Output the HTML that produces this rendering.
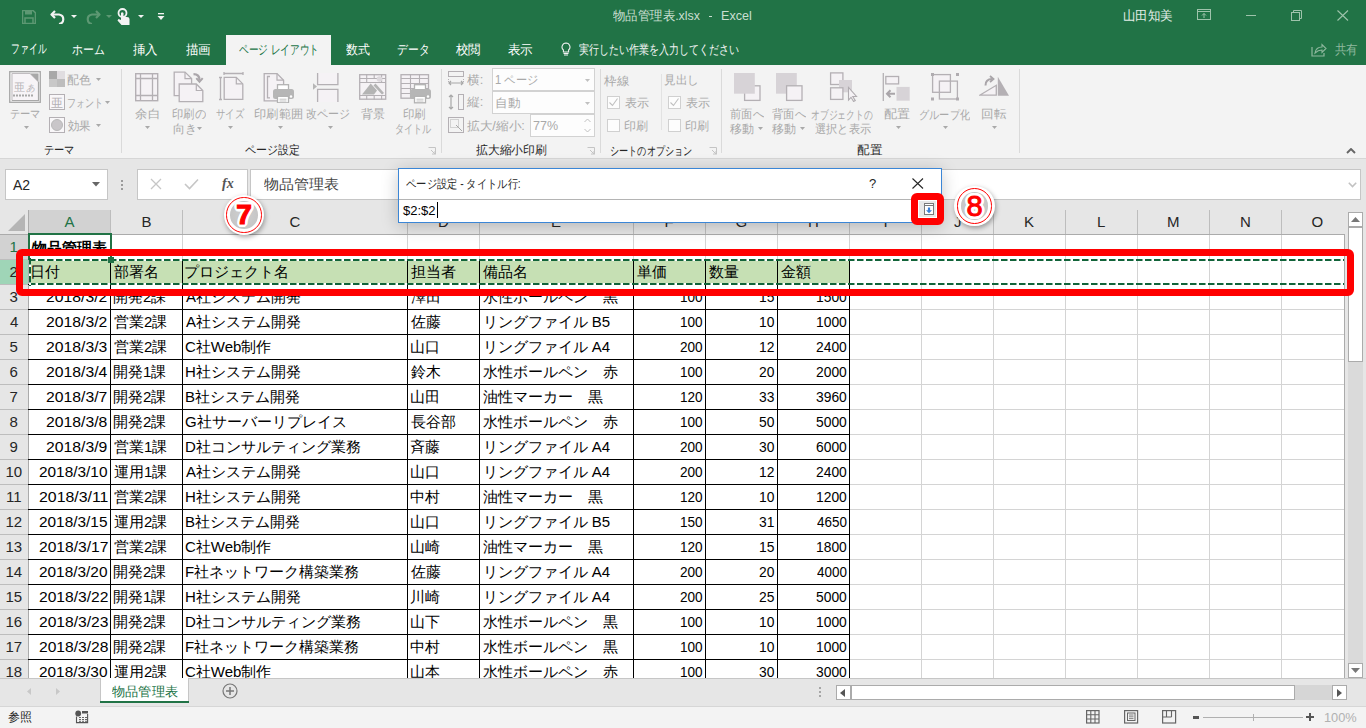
<!DOCTYPE html>
<html lang="ja"><head><meta charset="utf-8">
<style>
*{box-sizing:border-box;margin:0;padding:0}
html,body{width:1366px;height:728px;overflow:hidden;background:#e6e6e6;font-family:"Liberation Sans",sans-serif;position:relative}
.a{position:absolute;white-space:nowrap}
svg.a text{font-family:"Liberation Sans",sans-serif}
</style></head><body>
<div class="a" style="left:0px;top:0px;width:1366px;height:65px;background:#217346"></div>
<svg class="a" style="left:22px;top:10px;" width="14" height="14" viewBox="0 0 14 14"><path d="M0.5 0.5h10.5l2.5 2.5v10.5h-13z" fill="none" stroke="#5d9873" stroke-width="1.6"/><rect x="3" y="0.5" width="7" height="4" fill="#5d9873"/><rect x="3" y="8" width="8" height="6" fill="none" stroke="#5d9873" stroke-width="1.5"/></svg>
<svg class="a" style="left:50px;top:9px;" width="16" height="15" viewBox="0 0 16 15"><path d="M5 2 L1.5 5.5 L5 9" fill="none" stroke="#f3f3f3" stroke-width="2.2" stroke-linejoin="round"/><path d="M2 5.5 H9 A5 4.8 0 0 1 9 15" fill="none" stroke="#f3f3f3" stroke-width="2.2"/></svg>
<svg class="a" style="left:71px;top:15px;" width="6" height="3" viewBox="0 0 6 3"><path d="M0 0h6l-3 3z" fill="#f3f3f3"/></svg>
<svg class="a" style="left:85px;top:9px;" width="16" height="15" viewBox="0 0 16 15"><path d="M11 2 L14.5 5.5 L11 9" fill="none" stroke="#5d9873" stroke-width="2.2" stroke-linejoin="round"/><path d="M14 5.5 H7 A5 4.8 0 0 0 7 15" fill="none" stroke="#5d9873" stroke-width="2.2"/></svg>
<svg class="a" style="left:106px;top:15px;" width="6" height="3" viewBox="0 0 6 3"><path d="M0 0h6l-3 3z" fill="#5d9873"/></svg>
<svg class="a" style="left:117px;top:8px;" width="14" height="18" viewBox="0 0 14 18"><circle cx="5.5" cy="5" r="4" fill="none" stroke="#f3f3f3" stroke-width="1.8"/><path d="M4 5 V12 L1.5 11 L0.5 12.5 L4.5 17 H12.5 V11 Q12.5 9 10 9 H6.5 V5 Q5 3.5 4 5z" fill="#f3f3f3"/></svg>
<svg class="a" style="left:138px;top:15px;" width="6" height="3" viewBox="0 0 6 3"><path d="M0 0h6l-3 3z" fill="#f3f3f3"/></svg>
<svg class="a" style="left:157px;top:13px;" width="8" height="8" viewBox="0 0 8 8"><rect x="1" y="0" width="6" height="1.3" fill="#f3f3f3"/><path d="M0.5 3h7l-3.5 4z" fill="#f3f3f3"/></svg>
<div class="a" style="left:613.00px;top:7.25px;font-size:13px;line-height:18px;color:#c9dfd1;font-weight:normal;transform:scaleX(0.9560);transform-origin:0 0;">物品管理表.xlsx</div>
<div class="a" style="left:709px;top:16px;width:3px;height:1px;background:#c9dfd1"></div>
<div class="a" style="left:721.03px;top:7.25px;font-size:13px;line-height:18px;color:#c9dfd1;font-weight:normal;transform:scaleX(0.9667);transform-origin:0 0;">Excel</div>
<div class="a" style="left:1123.04px;top:7.00px;font-size:13px;line-height:18px;color:#e4eee8;font-weight:normal;transform:scaleX(0.9600);transform-origin:0 0;">山田知美</div>
<svg class="a" style="left:1197px;top:9px;" width="15" height="12" viewBox="0 0 15 12"><rect x="0.5" y="0.5" width="13" height="10" fill="none" stroke="#9ec3ab" stroke-width="1"/><path d="M0.5 2.5h13" stroke="#9ec3ab"/><path d="M7 9V4.5M5 6.5l2-2 2 2" fill="none" stroke="#9ec3ab"/></svg>
<div class="a" style="left:1246px;top:15px;width:10px;height:1px;background:#9ec3ab"></div>
<svg class="a" style="left:1291px;top:10px;" width="12" height="11" viewBox="0 0 12 11"><rect x="0.5" y="2.5" width="8" height="8" fill="none" stroke="#9ec3ab"/><path d="M2.5 2.5V0.5H10.5V8.5H8.5" fill="none" stroke="#9ec3ab"/></svg>
<svg class="a" style="left:1337px;top:10px;" width="12" height="11" viewBox="0 0 12 11"><path d="M0.5 0.5L11 10.5M11 0.5L0.5 10.5" stroke="#9ec3ab" stroke-width="1.1"/></svg>
<div class="a" style="left:226px;top:35px;width:105px;height:30px;background:#f3f3f3"></div>
<div class="a" style="left:10.64px;top:40.00px;font-size:13px;line-height:18px;color:#ffffff;font-weight:normal;transform:scaleX(0.6800);transform-origin:0 0;">ファイル</div>
<div class="a" style="left:72.16px;top:40.50px;font-size:13px;line-height:18px;color:#ffffff;font-weight:normal;transform:scaleX(0.8378);transform-origin:0 0;">ホーム</div>
<div class="a" style="left:133.00px;top:41.00px;font-size:13px;line-height:18px;color:#ffffff;font-weight:normal;transform:scaleX(0.9600);transform-origin:0 0;">挿入</div>
<div class="a" style="left:186.00px;top:41.00px;font-size:13px;line-height:18px;color:#ffffff;font-weight:normal;transform:scaleX(0.9615);transform-origin:0 0;">描画</div>
<div class="a" style="left:346.00px;top:41.00px;font-size:13px;line-height:18px;color:#ffffff;font-weight:normal;transform:scaleX(0.9231);transform-origin:0 0;">数式</div>
<div class="a" style="left:397.17px;top:40.50px;font-size:13px;line-height:18px;color:#ffffff;font-weight:normal;transform:scaleX(0.8333);transform-origin:0 0;">データ</div>
<div class="a" style="left:456.00px;top:40.50px;font-size:13px;line-height:18px;color:#ffffff;font-weight:normal;transform:scaleX(0.9600);transform-origin:0 0;">校閲</div>
<div class="a" style="left:508.00px;top:41.00px;font-size:13px;line-height:18px;color:#ffffff;font-weight:normal;transform:scaleX(0.9615);transform-origin:0 0;">表示</div>
<div class="a" style="left:239.00px;top:40.50px;font-size:13px;line-height:18px;color:#217346;font-weight:normal;transform:scaleX(0.7429);transform-origin:0 0;">ページ レイアウト</div>
<svg class="a" style="left:561px;top:42px;" width="10" height="14" viewBox="0 0 10 14"><path d="M5 1 A4 4 0 0 1 7.6 8 V10 H2.4 V8 A4 4 0 0 1 5 1z" fill="none" stroke="#f3f3f3" stroke-width="1.1"/><path d="M2.5 11.5H7.5M3 13H7" stroke="#f3f3f3" stroke-width="1"/></svg>
<div class="a" style="left:579.00px;top:41.00px;font-size:13px;line-height:18px;color:#f3f3f3;font-weight:normal;transform:scaleX(0.7692);transform-origin:0 0;">実行したい作業を入力してください</div>
<svg class="a" style="left:1311px;top:42px;" width="16" height="15" viewBox="0 0 16 15"><path d="M1 5v9h12v-3" fill="none" stroke="#8fb89e" stroke-width="1.2"/><path d="M4 11 Q5 5 11 5 V2.5 L15 6.5 L11 10.5 V8 Q7 8 4 11z" fill="none" stroke="#8fb89e" stroke-width="1.1"/></svg>
<div class="a" style="left:1335.00px;top:41.00px;font-size:13px;line-height:18px;color:#8fb89e;font-weight:normal;transform:scaleX(0.8846);transform-origin:0 0;">共有</div>
<div class="a" style="left:0px;top:65px;width:1366px;height:94px;background:#f3f3f3"></div>
<div class="a" style="left:0px;top:158px;width:1366px;height:1px;background:#d6d6d6"></div>
<svg class="a" style="left:9px;top:71px;" width="32" height="32" viewBox="0 0 32 32"><rect x="0.7" y="0.7" width="30.6" height="30.6" fill="#f3f3f3" stroke="#a8a8a8" stroke-width="1.3"/><path d="M3 2.5H21L29.5 11V29.5H3Z" fill="#f7f4f7" stroke="#c0bcc0"/><path d="M21 2.5H29.5V11Z" fill="#a8a8a8"/><path d="M29.5 11V29.5H3" fill="none" stroke="#a8a8a8" stroke-width="1.2"/><text x="4.5" y="20" font-size="11" fill="#b8b4b8">亜</text><text x="17" y="20" font-size="9" fill="#b8b4b8" font-style="italic">あ</text><path d="M4 24.5h2M7 24.5h2M10 24.5h2M13 24.5h2M16 24.5h2M19 24.5h2M22 24.5h2" stroke="#a8a8a8" stroke-width="2"/></svg>
<div class="a" style="left:10.15px;top:105.50px;font-size:12px;line-height:17px;color:#a9a9a9;font-weight:normal;transform:scaleX(0.8529);transform-origin:0 0;">テーマ</div>
<svg class="a" style="left:23.5px;top:126px;" width="5" height="3" viewBox="0 0 5 3"><path d="M0 0h5l-2.5 3z" fill="#a9a9a9"/></svg>
<svg class="a" style="left:49px;top:71px;" width="16" height="16" viewBox="0 0 16 16"><rect x="0" y="0" width="8" height="8" fill="#a8a8a8"/><rect x="8" y="0" width="8" height="8" fill="#e0dde0"/><rect x="0" y="8" width="8" height="8" fill="#c8c8c8"/><rect x="8" y="8" width="8" height="8" fill="#bdbdbd"/></svg>
<div class="a" style="left:67.00px;top:71.50px;font-size:12px;line-height:17px;color:#a9a9a9;font-weight:normal;">配色</div>
<svg class="a" style="left:95.5px;top:78px;" width="5" height="3" viewBox="0 0 5 3"><path d="M0 0h5l-2.5 3z" fill="#a9a9a9"/></svg>
<svg class="a" style="left:49px;top:94px;" width="16" height="16" viewBox="0 0 16 16"><rect x="0.5" y="0.5" width="15" height="15" fill="#f9f7f9" stroke="#b4b0b4"/><text x="2" y="13" font-size="12" fill="#b4b0b4">亜</text></svg>
<div class="a" style="left:67.25px;top:94.50px;font-size:12px;line-height:17px;color:#a9a9a9;font-weight:normal;transform:scaleX(0.7500);transform-origin:0 0;">フォント</div>
<svg class="a" style="left:104.5px;top:101px;" width="5" height="3" viewBox="0 0 5 3"><path d="M0 0h5l-2.5 3z" fill="#a9a9a9"/></svg>
<svg class="a" style="left:49px;top:117px;" width="16" height="16" viewBox="0 0 16 16"><rect x="0.5" y="0.5" width="15" height="15" fill="#f9f7f9" stroke="#b4b0b4"/><circle cx="8" cy="8" r="5.5" fill="#c9c6c9" stroke="#b8b8b8"/></svg>
<div class="a" style="left:68.00px;top:117.50px;font-size:12px;line-height:17px;color:#a9a9a9;font-weight:normal;transform:scaleX(0.9583);transform-origin:0 0;">効果</div>
<svg class="a" style="left:95.5px;top:124px;" width="5" height="3" viewBox="0 0 5 3"><path d="M0 0h5l-2.5 3z" fill="#a9a9a9"/></svg>
<div class="a" style="left:44.15px;top:141.50px;font-size:12px;line-height:17px;color:#262626;font-weight:normal;transform:scaleX(0.8529);transform-origin:0 0;">テーマ</div>
<div class="a" style="left:121px;top:69px;width:1px;height:84px;background:#dadada"></div>
<svg class="a" style="left:135px;top:73px;" width="24" height="29" viewBox="0 0 24 29"><rect x="0.7" y="0.7" width="22" height="27" fill="#f5f2f5" stroke="#b4b0b4" stroke-width="1.4"/><path d="M5.5 0.7v27M17.5 0.7v27M0.7 5.5h22M0.7 22.5h22" stroke="#b4b0b4" stroke-width="1.3"/></svg>
<div class="a" style="left:135.00px;top:106.00px;font-size:12px;line-height:17px;color:#a9a9a9;font-weight:normal;transform:scaleX(1.0455);transform-origin:0 0;">余白</div>
<svg class="a" style="left:144.5px;top:126px;" width="5" height="3" viewBox="0 0 5 3"><path d="M0 0h5l-2.5 3z" fill="#a9a9a9"/></svg>
<svg class="a" style="left:173px;top:71px;" width="32" height="32" viewBox="0 0 32 32"><path d="M1.2 1.1H12L18.6 7.6V24.6H1.2Z" fill="#f5f2f5" stroke="#b4b0b4" stroke-width="1.3"/><path d="M12 1.1V7.6H18.6" fill="none" stroke="#b4b0b4" stroke-width="1.2"/><path d="M6.2 13H23.3L29.8 19.5V30.6H6.2Z" fill="#f5f2f5" stroke="#b4b0b4" stroke-width="1.3"/><path d="M23.3 13V19.5H29.8" fill="none" stroke="#b4b0b4" stroke-width="1.2"/><path d="M20.5 3.2Q26.5 3.2 26.5 9" fill="none" stroke="#aaa6aa" stroke-width="2.2"/><path d="M23.3 7.2L26.5 10.8L29.7 7.2" fill="none" stroke="#aaa6aa" stroke-width="2"/></svg>
<div class="a" style="left:172.06px;top:106.00px;font-size:12px;line-height:17px;color:#a9a9a9;font-weight:normal;transform:scaleX(0.9429);transform-origin:0 0;">印刷の</div>
<div class="a" style="left:173.00px;top:121.00px;font-size:12px;line-height:17px;color:#a9a9a9;font-weight:normal;">向き</div>
<svg class="a" style="left:196.5px;top:127px;" width="5" height="3" viewBox="0 0 5 3"><path d="M0 0h5l-2.5 3z" fill="#a9a9a9"/></svg>
<svg class="a" style="left:218px;top:72px;" width="27" height="29" viewBox="0 0 27 29"><path d="M2.5 5.5V27.5M1 5.5H4M1 27.5H4" fill="none" stroke="#b4b0b4" stroke-width="1.3"/><path d="M6 1.5H25M6 0V3M25 0V3" fill="none" stroke="#b4b0b4" stroke-width="1.3"/><path d="M6.2 5.4H18.3L24.8 11.9V27.4H6.2Z" fill="#f5f2f5" stroke="#b4b0b4" stroke-width="1.3"/><path d="M18.3 5.4V11.9H24.8" fill="none" stroke="#b4b0b4" stroke-width="1.2"/></svg>
<div class="a" style="left:216.00px;top:106.00px;font-size:12px;line-height:17px;color:#a9a9a9;font-weight:normal;transform:scaleX(0.7778);transform-origin:0 0;">サイズ</div>
<svg class="a" style="left:227.5px;top:126px;" width="5" height="3" viewBox="0 0 5 3"><path d="M0 0h5l-2.5 3z" fill="#a9a9a9"/></svg>
<svg class="a" style="left:263px;top:73px;" width="32" height="30" viewBox="0 0 32 30"><path d="M1.2 0.6H14L20.6 7.2V27.8H1.2Z" fill="#f5f2f5" stroke="#b4b0b4" stroke-width="1.3"/><path d="M14 0.6V7.2H20.6" fill="none" stroke="#b4b0b4" stroke-width="1.2"/><path d="M7 3.5H4.5V24.8H7" fill="none" stroke="#b4b0b4" stroke-width="1.3"/><rect x="14.5" y="11.7" width="11" height="7" fill="#fff" stroke="#b2b2b2" stroke-width="1.3"/><rect x="10" y="16" width="21" height="10" rx="2.5" fill="#b6b6b6"/><circle cx="28" cy="23.5" r="1.2" fill="#fff"/><rect x="14.5" y="23.3" width="11" height="6.5" fill="#fff" stroke="#b2b2b2" stroke-width="1.3"/><path d="M16.5 26.2h7M16.5 28h7" stroke="#c4c4c4" stroke-width="1"/></svg>
<div class="a" style="left:253.98px;top:106.00px;font-size:12px;line-height:17px;color:#a9a9a9;font-weight:normal;transform:scaleX(1.0217);transform-origin:0 0;">印刷範囲</div>
<svg class="a" style="left:277.5px;top:126px;" width="5" height="3" viewBox="0 0 5 3"><path d="M0 0h5l-2.5 3z" fill="#a9a9a9"/></svg>
<svg class="a" style="left:313px;top:73px;" width="26" height="29" viewBox="0 0 26 29"><rect x="4.5" y="0" width="20.5" height="11.5" fill="#f5f2f5"/><rect x="4.5" y="16.5" width="20.5" height="12.5" fill="#f5f2f5"/><path d="M4.6 0V11.6H24.9V0M4.6 29V16.4H24.9V29" fill="none" stroke="#b4b0b4" stroke-width="1.3"/><path d="M0 10.3L4 13.5L0 16.8z" fill="#b6b6b6"/></svg>
<div class="a" style="left:306.09px;top:105.50px;font-size:12px;line-height:17px;color:#a9a9a9;font-weight:normal;transform:scaleX(0.9130);transform-origin:0 0;">改ページ</div>
<svg class="a" style="left:327.5px;top:126px;" width="5" height="3" viewBox="0 0 5 3"><path d="M0 0h5l-2.5 3z" fill="#a9a9a9"/></svg>
<svg class="a" style="left:359px;top:74px;" width="28" height="26" viewBox="0 0 28 26"><rect x="0.7" y="0.7" width="26" height="24.5" fill="#f5f2f5" stroke="#b4b0b4" stroke-width="1.3"/><path d="M0.7 4.5h26M0.7 8.5h26M0.7 21.5h26M7.7 0v4.5M15.2 0v4.5M22.6 0v4.5M7.7 21.5v4M15.2 21.5v4M22.6 21.5v4M7.7 4.5v4M22.6 4.5v4" stroke="#b4b0b4" stroke-width="1.1"/><path d="M3 20.5L11.7 9.5L18 16.5L15 20.5z" fill="#b4b4b4"/><path d="M14.5 11.5L16.5 9.5L25 19L23 20.5z" fill="#b4b4b4"/><circle cx="20.5" cy="5" r="2.8" fill="#dcd8dc"/></svg>
<div class="a" style="left:361.00px;top:106.00px;font-size:12px;line-height:17px;color:#a9a9a9;font-weight:normal;">背景</div>
<svg class="a" style="left:400px;top:74px;" width="32" height="30" viewBox="0 0 32 30"><rect x="1" y="0.7" width="27.5" height="23.5" fill="#f5f2f5" stroke="#b4b0b4" stroke-width="1.3"/><path d="M1 4.5h27.5M1 9.5h27.5M1 14.5h27.5M1 19.5h27.5M10.5 0v24M19.5 0v24" stroke="#b4b0b4" stroke-width="1.1"/><rect x="14.5" y="10.7" width="11" height="7" fill="#fff" stroke="#b2b2b2" stroke-width="1.3"/><rect x="10" y="15" width="21" height="10" rx="2.5" fill="#b6b6b6"/><circle cx="28" cy="22.5" r="1.2" fill="#fff"/><rect x="14.5" y="22.3" width="11" height="6.5" fill="#fff" stroke="#b2b2b2" stroke-width="1.3"/><path d="M16.5 25.2h7M16.5 27h7" stroke="#c4c4c4" stroke-width="1"/></svg>
<div class="a" style="left:403.04px;top:106.00px;font-size:12px;line-height:17px;color:#a9a9a9;font-weight:normal;transform:scaleX(0.9565);transform-origin:0 0;">印刷</div>
<div class="a" style="left:395.48px;top:120.50px;font-size:12px;line-height:17px;color:#a9a9a9;font-weight:normal;transform:scaleX(0.7609);transform-origin:0 0;">タイトル</div>
<div class="a" style="left:245.09px;top:142.00px;font-size:12px;line-height:17px;color:#262626;font-weight:normal;transform:scaleX(0.9138);transform-origin:0 0;">ページ設定</div>
<svg class="a" style="left:428px;top:147px;" width="9" height="9" viewBox="0 0 9 9"><path d="M0.5 0.5h7v7" fill="none" stroke="#c4c4c4"/><path d="M3 3l4 4M7 4v3h-3" fill="none" stroke="#c4c4c4"/></svg>
<div class="a" style="left:441px;top:69px;width:1px;height:84px;background:#dadada"></div>
<svg class="a" style="left:448px;top:71px;" width="16" height="16" viewBox="0 0 16 16"><rect x="0.5" y="0.5" width="15" height="5" fill="none" stroke="#b4b0b4"/><path d="M0.5 8v4M15.5 8v4" stroke="#b4b0b4" stroke-dasharray="1 1"/><path d="M1 12h14M3 10l-2 2 2 2M13 10l2 2-2 2" fill="none" stroke="#a8a8a8" stroke-width="1.2"/></svg>
<div class="a" style="left:467.00px;top:72.00px;font-size:12px;line-height:17px;color:#a9a9a9;font-weight:normal;transform:scaleX(1.0667);transform-origin:0 0;">横:</div>
<div class="a" style="left:492px;top:68px;width:103px;height:23px;background:#fdfdfd;border:1px solid #d2d2d2"></div>
<div class="a" style="left:495.07px;top:71.50px;font-size:12px;line-height:17px;color:#a9a9a9;font-weight:normal;transform:scaleX(0.9318);transform-origin:0 0;">1 ページ</div>
<svg class="a" style="left:584.5px;top:79px;" width="5" height="3" viewBox="0 0 5 3"><path d="M0 0h5l-2.5 3z" fill="#c0c0c0"/></svg>
<svg class="a" style="left:448px;top:94px;" width="16" height="16" viewBox="0 0 16 16"><rect x="10.5" y="0.5" width="5" height="15" fill="none" stroke="#b4b0b4"/><path d="M3 1v14M1 3l2-2 2 2M1 13l2 2 2-2" fill="none" stroke="#a8a8a8" stroke-width="1.2"/></svg>
<div class="a" style="left:467.00px;top:94.00px;font-size:12px;line-height:17px;color:#a9a9a9;font-weight:normal;transform:scaleX(1.0667);transform-origin:0 0;">縦:</div>
<div class="a" style="left:492px;top:91px;width:103px;height:23px;background:#fdfdfd;border:1px solid #d2d2d2"></div>
<div class="a" style="left:494.95px;top:94.50px;font-size:12px;line-height:17px;color:#a9a9a9;font-weight:normal;transform:scaleX(1.0455);transform-origin:0 0;">自動</div>
<svg class="a" style="left:584.5px;top:102px;" width="5" height="3" viewBox="0 0 5 3"><path d="M0 0h5l-2.5 3z" fill="#c0c0c0"/></svg>
<svg class="a" style="left:448px;top:117px;" width="16" height="16" viewBox="0 0 16 16"><rect x="0.5" y="0.5" width="15" height="15" fill="none" stroke="#b4b0b4"/><rect x="2.5" y="2.5" width="8" height="8" fill="none" stroke="#b0b0b0" stroke-dasharray="1 1"/><path d="M8 8l6 6" stroke="#a8a8a8"/></svg>
<div class="a" style="left:467.00px;top:117.50px;font-size:12px;line-height:17px;color:#a9a9a9;font-weight:normal;transform:scaleX(1.0556);transform-origin:0 0;">拡大/縮小:</div>
<div class="a" style="left:530px;top:114px;width:65px;height:23px;background:#fdfdfd;border:1px solid #d2d2d2"></div>
<div class="a" style="left:533.00px;top:118.00px;font-size:12px;line-height:17px;color:#a9a9a9;font-weight:normal;transform:scaleX(1.0417);transform-origin:0 0;">77%</div>
<svg class="a" style="left:584px;top:118px;" width="7" height="15" viewBox="0 0 7 15"><path d="M0.5 4l3-3 3 3M0.5 11l3 3 3-3" fill="none" stroke="#c0c0c0"/></svg>
<div class="a" style="left:476.00px;top:142.00px;font-size:12px;line-height:17px;color:#262626;font-weight:normal;transform:scaleX(0.9861);transform-origin:0 0;">拡大縮小印刷</div>
<svg class="a" style="left:587px;top:147px;" width="9" height="9" viewBox="0 0 9 9"><path d="M0.5 0.5h7v7" fill="none" stroke="#c4c4c4"/><path d="M3 3l4 4M7 4v3h-3" fill="none" stroke="#c4c4c4"/></svg>
<div class="a" style="left:600px;top:69px;width:1px;height:84px;background:#dadada"></div>
<div class="a" style="left:604.00px;top:72.50px;font-size:12px;line-height:17px;color:#a9a9a9;font-weight:normal;transform:scaleX(1.0435);transform-origin:0 0;">枠線</div>
<div class="a" style="left:607px;top:96px;width:13px;height:13px;background:#fdfdfd;border:1px solid #d0d0d0"></div>
<svg class="a" style="left:609px;top:98px;" width="9" height="9" viewBox="0 0 9 9"><path d="M0.5 4.5l3 3 5-7" fill="none" stroke="#c0c0c0" stroke-width="1.1"/></svg>
<div class="a" style="left:625.00px;top:94.50px;font-size:12px;line-height:17px;color:#a9a9a9;font-weight:normal;">表示</div>
<div class="a" style="left:607px;top:119px;width:13px;height:13px;background:#fdfdfd;border:1px solid #d0d0d0"></div>
<div class="a" style="left:624.00px;top:117.50px;font-size:12px;line-height:17px;color:#a9a9a9;font-weight:normal;">印刷</div>
<div class="a" style="left:661px;top:74px;width:1px;height:56px;background:#e2e2e2"></div>
<div class="a" style="left:664.03px;top:72.00px;font-size:12px;line-height:17px;color:#a9a9a9;font-weight:normal;transform:scaleX(0.9697);transform-origin:0 0;">見出し</div>
<div class="a" style="left:668px;top:96px;width:13px;height:13px;background:#fdfdfd;border:1px solid #d0d0d0"></div>
<svg class="a" style="left:670px;top:98px;" width="9" height="9" viewBox="0 0 9 9"><path d="M0.5 4.5l3 3 5-7" fill="none" stroke="#c0c0c0" stroke-width="1.1"/></svg>
<div class="a" style="left:686.00px;top:94.50px;font-size:12px;line-height:17px;color:#a9a9a9;font-weight:normal;">表示</div>
<div class="a" style="left:668px;top:119px;width:13px;height:13px;background:#fdfdfd;border:1px solid #d0d0d0"></div>
<div class="a" style="left:685.00px;top:117.50px;font-size:12px;line-height:17px;color:#a9a9a9;font-weight:normal;">印刷</div>
<div class="a" style="left:610.48px;top:142.50px;font-size:12px;line-height:17px;color:#262626;font-weight:normal;transform:scaleX(0.7619);transform-origin:0 0;">シートのオプション</div>
<svg class="a" style="left:709px;top:147px;" width="9" height="9" viewBox="0 0 9 9"><path d="M0.5 0.5h7v7" fill="none" stroke="#c4c4c4"/><path d="M3 3l4 4M7 4v3h-3" fill="none" stroke="#c4c4c4"/></svg>
<div class="a" style="left:721px;top:69px;width:1px;height:84px;background:#dadada"></div>
<svg class="a" style="left:733px;top:72px;" width="28" height="30" viewBox="0 0 28 30"><rect x="11.6" y="13.8" width="15.4" height="14.6" fill="#f5f2f5" stroke="#b4b0b4" stroke-width="1.3"/><rect x="1" y="1" width="20.8" height="20.7" fill="#d7d3d7"/></svg>
<div class="a" style="left:730.00px;top:106.00px;font-size:12px;line-height:17px;color:#a9a9a9;font-weight:normal;transform:scaleX(0.9444);transform-origin:0 0;">前面へ</div>
<div class="a" style="left:730.00px;top:120.50px;font-size:12px;line-height:17px;color:#a9a9a9;font-weight:normal;">移動</div>
<svg class="a" style="left:757.5px;top:127px;" width="5" height="3" viewBox="0 0 5 3"><path d="M0 0h5l-2.5 3z" fill="#a9a9a9"/></svg>
<svg class="a" style="left:776px;top:72px;" width="28" height="30" viewBox="0 0 28 30"><rect x="0" y="1" width="20.8" height="20.7" fill="#d7d3d7"/><rect x="10.6" y="13.8" width="15.4" height="14.6" fill="#f5f2f5" stroke="#b4b0b4" stroke-width="1.3"/></svg>
<div class="a" style="left:772.00px;top:106.00px;font-size:12px;line-height:17px;color:#a9a9a9;font-weight:normal;transform:scaleX(0.9444);transform-origin:0 0;">背面へ</div>
<div class="a" style="left:772.00px;top:120.50px;font-size:12px;line-height:17px;color:#a9a9a9;font-weight:normal;">移動</div>
<svg class="a" style="left:799.5px;top:127px;" width="5" height="3" viewBox="0 0 5 3"><path d="M0 0h5l-2.5 3z" fill="#a9a9a9"/></svg>
<svg class="a" style="left:829px;top:71px;" width="29" height="31" viewBox="0 0 29 31"><rect x="1.6" y="1.9" width="12.3" height="11.6" fill="#f5f2f5" stroke="#b4b0b4" stroke-width="1.3"/><rect x="10" y="9" width="13" height="12.3" fill="#d7d3d7"/><rect x="1.6" y="16.8" width="12.3" height="11.6" fill="#f5f2f5" stroke="#b4b0b4" stroke-width="1.3"/><path d="M19.5 16.5V29L22 26.3L24.6 30.5L26.3 29.6L23.8 25.5H27.5Z" fill="#f5f2f5" stroke="#b0acb0" stroke-width="1.1"/></svg>
<div class="a" style="left:811.27px;top:106.50px;font-size:12px;line-height:17px;color:#a9a9a9;font-weight:normal;transform:scaleX(0.7349);transform-origin:0 0;">オブジェクトの</div>
<div class="a" style="left:815.00px;top:120.50px;font-size:12px;line-height:17px;color:#a9a9a9;font-weight:normal;transform:scaleX(0.9333);transform-origin:0 0;">選択と表示</div>
<svg class="a" style="left:882px;top:72px;" width="29" height="30" viewBox="0 0 29 30"><path d="M1.3 1V29" stroke="#b4b0b4" stroke-width="1.3"/><rect x="3.8" y="4.5" width="12.8" height="7.4" fill="#f5f2f5" stroke="#b4b0b4" stroke-width="1.3"/><rect x="14.5" y="14.9" width="13.2" height="13.8" fill="#d7d3d7"/><path d="M5 21.7h8M8.5 18.2L5 21.7L8.5 25.2" fill="none" stroke="#a9a5a9" stroke-width="2"/></svg>
<div class="a" style="left:883.91px;top:106.00px;font-size:12px;line-height:17px;color:#a9a9a9;font-weight:normal;transform:scaleX(1.0909);transform-origin:0 0;">配置</div>
<svg class="a" style="left:895.5px;top:126px;" width="5" height="3" viewBox="0 0 5 3"><path d="M0 0h5l-2.5 3z" fill="#a9a9a9"/></svg>
<svg class="a" style="left:931px;top:73px;" width="28" height="28" viewBox="0 0 28 28"><rect x="1.6" y="1.6" width="17.8" height="17.7" fill="#f5f2f5" stroke="#b4b0b4" stroke-width="1.3"/><rect x="8.4" y="8.1" width="18" height="17.9" fill="none" stroke="#b4b0b4" stroke-width="1.3"/><rect x="0" y="0" width="3" height="3" fill="#b0acb0"/><rect x="25" y="0" width="3" height="3" fill="#b0acb0"/><rect x="0" y="24.5" width="3" height="3" fill="#b0acb0"/><rect x="25" y="24.5" width="3" height="3" fill="#b0acb0"/></svg>
<div class="a" style="left:919.15px;top:106.50px;font-size:12px;line-height:17px;color:#a9a9a9;font-weight:normal;transform:scaleX(0.8475);transform-origin:0 0;">グループ化</div>
<svg class="a" style="left:942.5px;top:126px;" width="5" height="3" viewBox="0 0 5 3"><path d="M0 0h5l-2.5 3z" fill="#a9a9a9"/></svg>
<svg class="a" style="left:979px;top:75px;" width="31" height="22" viewBox="0 0 31 22"><path d="M0.7 20.2L17.3 10.3V20.2Z" fill="#f5f2f5" stroke="#b4b0b4" stroke-width="1.3"/><path d="M18.8 1.7V20.8H30Z" fill="#b4b0b4"/><path d="M6.5 10.5Q6.5 4 13 4" fill="none" stroke="#a9a5a9" stroke-width="2"/><path d="M11 1L14.5 4L11 7" fill="none" stroke="#a9a5a9" stroke-width="1.8"/></svg>
<div class="a" style="left:980.96px;top:106.00px;font-size:12px;line-height:17px;color:#a9a9a9;font-weight:normal;transform:scaleX(1.0435);transform-origin:0 0;">回転</div>
<svg class="a" style="left:991.5px;top:126px;" width="5" height="3" viewBox="0 0 5 3"><path d="M0 0h5l-2.5 3z" fill="#a9a9a9"/></svg>
<div class="a" style="left:856.95px;top:142.00px;font-size:12px;line-height:17px;color:#262626;font-weight:normal;transform:scaleX(1.0455);transform-origin:0 0;">配置</div>
<div class="a" style="left:1019px;top:69px;width:1px;height:84px;background:#dadada"></div>
<svg class="a" style="left:1346px;top:148px;" width="10" height="6" viewBox="0 0 10 6"><path d="M1 5l4-4 4 4" fill="none" stroke="#666" stroke-width="1.9"/></svg>
<div class="a" style="left:0px;top:159px;width:1366px;height:51px;background:#e6e6e6"></div>
<div class="a" style="left:5px;top:169px;width:103px;height:31px;background:#fff;border:1px solid #c6c6c6"></div>
<div class="a" style="left:13.00px;top:174.50px;font-size:14px;line-height:20px;color:#262626;font-weight:normal;">A2</div>
<svg class="a" style="left:92px;top:182px;" width="8" height="5" viewBox="0 0 8 5"><path d="M0 0h8l-4 4.5z" fill="#666"/></svg>
<div class="a" style="left:121px;top:180px;width:2px;height:2px;background:#9b9b9b"></div>
<div class="a" style="left:121px;top:184px;width:2px;height:2px;background:#9b9b9b"></div>
<div class="a" style="left:121px;top:188px;width:2px;height:2px;background:#9b9b9b"></div>
<div class="a" style="left:137px;top:169px;width:111px;height:31px;background:#fff;border:1px solid #c6c6c6"></div>
<svg class="a" style="left:150px;top:178px;" width="12" height="12" viewBox="0 0 12 12"><path d="M1 1L11 11M11 1L1 11" stroke="#c6c6c6" stroke-width="1.3"/></svg>
<svg class="a" style="left:184px;top:178px;" width="15" height="12" viewBox="0 0 15 12"><path d="M1 6l4.5 4.5L14 1.5" fill="none" stroke="#c6c6c6" stroke-width="1.6"/></svg>
<div class="a" style="left:222.00px;top:173.50px;font-size:14px;line-height:20px;color:#555;font-weight:bold;font-family:'Liberation Serif',serif;font-style:italic;letter-spacing:-1pxtransform:scaleX(1.0909);transform-origin:0 0;">fx</div>
<div class="a" style="left:250px;top:169px;width:1111px;height:31px;background:#fff;border:1px solid #c6c6c6"></div>
<div class="a" style="left:264.00px;top:174.00px;font-size:14px;line-height:20px;color:#444;font-weight:normal;transform:scaleX(1.0725);transform-origin:0 0;">物品管理表</div>
<svg class="a" style="left:1348px;top:182px;" width="9" height="6" viewBox="0 0 9 6"><path d="M0.8 0.8l3.7 3.7 3.7-3.7" fill="none" stroke="#c2c2c2" stroke-width="1.6"/></svg>
<div class="a" style="left:0px;top:210px;width:1344px;height:24px;background:#e6e6e6"></div>
<div class="a" style="left:0px;top:234px;width:1344px;height:1px;background:#ababab"></div>
<svg class="a" style="left:8px;top:214px;" width="17" height="17" viewBox="0 0 17 17"><path d="M17 0V17H0z" fill="#b5b5b5"/></svg>
<div class="a" style="left:28px;top:210px;width:1px;height:24px;background:#ababab"></div>
<div class="a" style="left:29px;top:210px;width:81px;height:24px;background:#d2d2d2"></div>
<div class="a" style="left:110px;top:210px;width:1px;height:24px;background:#bdbdbd"></div>
<div class="a" style="left:64.50px;top:210.50px;font-size:15px;line-height:21px;color:#217346;font-weight:normal;">A</div>
<div class="a" style="left:182px;top:210px;width:1px;height:24px;background:#bdbdbd"></div>
<div class="a" style="left:141.50px;top:210.50px;font-size:15px;line-height:21px;color:#262626;font-weight:normal;">B</div>
<div class="a" style="left:407px;top:210px;width:1px;height:24px;background:#bdbdbd"></div>
<div class="a" style="left:289.50px;top:210.50px;font-size:15px;line-height:21px;color:#262626;font-weight:normal;">C</div>
<div class="a" style="left:479px;top:210px;width:1px;height:24px;background:#bdbdbd"></div>
<div class="a" style="left:438.00px;top:210.50px;font-size:15px;line-height:21px;color:#262626;font-weight:normal;">D</div>
<div class="a" style="left:633px;top:210px;width:1px;height:24px;background:#bdbdbd"></div>
<div class="a" style="left:551.00px;top:210.50px;font-size:15px;line-height:21px;color:#262626;font-weight:normal;">E</div>
<div class="a" style="left:705px;top:210px;width:1px;height:24px;background:#bdbdbd"></div>
<div class="a" style="left:664.50px;top:210.50px;font-size:15px;line-height:21px;color:#262626;font-weight:normal;">F</div>
<div class="a" style="left:777px;top:210px;width:1px;height:24px;background:#bdbdbd"></div>
<div class="a" style="left:735.50px;top:210.50px;font-size:15px;line-height:21px;color:#262626;font-weight:normal;">G</div>
<div class="a" style="left:849px;top:210px;width:1px;height:24px;background:#bdbdbd"></div>
<div class="a" style="left:808.00px;top:210.50px;font-size:15px;line-height:21px;color:#262626;font-weight:normal;">H</div>
<div class="a" style="left:921px;top:210px;width:1px;height:24px;background:#bdbdbd"></div>
<div class="a" style="left:883.50px;top:210.50px;font-size:15px;line-height:21px;color:#262626;font-weight:normal;">I</div>
<div class="a" style="left:993px;top:210px;width:1px;height:24px;background:#bdbdbd"></div>
<div class="a" style="left:954.00px;top:210.50px;font-size:15px;line-height:21px;color:#262626;font-weight:normal;">J</div>
<div class="a" style="left:1065px;top:210px;width:1px;height:24px;background:#bdbdbd"></div>
<div class="a" style="left:1024.00px;top:210.50px;font-size:15px;line-height:21px;color:#262626;font-weight:normal;">K</div>
<div class="a" style="left:1137px;top:210px;width:1px;height:24px;background:#bdbdbd"></div>
<div class="a" style="left:1097.00px;top:210.50px;font-size:15px;line-height:21px;color:#262626;font-weight:normal;">L</div>
<div class="a" style="left:1209px;top:210px;width:1px;height:24px;background:#bdbdbd"></div>
<div class="a" style="left:1167.00px;top:210.50px;font-size:15px;line-height:21px;color:#262626;font-weight:normal;">M</div>
<div class="a" style="left:1281px;top:210px;width:1px;height:24px;background:#bdbdbd"></div>
<div class="a" style="left:1240.00px;top:210.50px;font-size:15px;line-height:21px;color:#262626;font-weight:normal;">N</div>
<div class="a" style="left:1353px;top:210px;width:1px;height:24px;background:#bdbdbd"></div>
<div class="a" style="left:1311.50px;top:210.50px;font-size:15px;line-height:21px;color:#262626;font-weight:normal;">O</div>
<div class="a" style="left:1344px;top:210px;width:22px;height:478px;background:#e6e6e6"></div>
<div class="a" style="left:29px;top:235px;width:1315px;height:443px;background:#fff"></div>
<div class="a" style="left:0px;top:235px;width:28px;height:443px;background:#e6e6e6"></div>
<div class="a" style="left:28px;top:235px;width:1px;height:443px;background:#ababab"></div>
<div class="a" style="left:0px;top:235px;width:28px;height:24px;background:#d2d2d2"></div>
<div class="a" style="left:0px;top:260px;width:28px;height:24px;background:#9fd5b7"></div>
<div class="a" style="left:0px;top:259px;width:28px;height:1px;background:#bdbdbd"></div>
<div class="a" style="left:9.50px;top:235.50px;font-size:15px;line-height:21px;color:#217346;font-weight:normal;">1</div>
<div class="a" style="left:0px;top:284px;width:28px;height:1px;background:#bdbdbd"></div>
<div class="a" style="left:9.50px;top:260.50px;font-size:15px;line-height:21px;color:#262626;font-weight:normal;">2</div>
<div class="a" style="left:0px;top:309px;width:28px;height:1px;background:#bdbdbd"></div>
<div class="a" style="left:9.50px;top:285.50px;font-size:15px;line-height:21px;color:#262626;font-weight:normal;">3</div>
<div class="a" style="left:0px;top:334px;width:28px;height:1px;background:#bdbdbd"></div>
<div class="a" style="left:10.00px;top:310.50px;font-size:15px;line-height:21px;color:#262626;font-weight:normal;">4</div>
<div class="a" style="left:0px;top:359px;width:28px;height:1px;background:#bdbdbd"></div>
<div class="a" style="left:9.50px;top:335.50px;font-size:15px;line-height:21px;color:#262626;font-weight:normal;">5</div>
<div class="a" style="left:0px;top:384px;width:28px;height:1px;background:#bdbdbd"></div>
<div class="a" style="left:9.50px;top:360.50px;font-size:15px;line-height:21px;color:#262626;font-weight:normal;">6</div>
<div class="a" style="left:0px;top:409px;width:28px;height:1px;background:#bdbdbd"></div>
<div class="a" style="left:9.50px;top:385.50px;font-size:15px;line-height:21px;color:#262626;font-weight:normal;">7</div>
<div class="a" style="left:0px;top:434px;width:28px;height:1px;background:#bdbdbd"></div>
<div class="a" style="left:9.50px;top:410.50px;font-size:15px;line-height:21px;color:#262626;font-weight:normal;">8</div>
<div class="a" style="left:0px;top:459px;width:28px;height:1px;background:#bdbdbd"></div>
<div class="a" style="left:9.50px;top:435.50px;font-size:15px;line-height:21px;color:#262626;font-weight:normal;">9</div>
<div class="a" style="left:0px;top:484px;width:28px;height:1px;background:#bdbdbd"></div>
<div class="a" style="left:5.50px;top:460.50px;font-size:15px;line-height:21px;color:#262626;font-weight:normal;">10</div>
<div class="a" style="left:0px;top:509px;width:28px;height:1px;background:#bdbdbd"></div>
<div class="a" style="left:6.00px;top:485.50px;font-size:15px;line-height:21px;color:#262626;font-weight:normal;">11</div>
<div class="a" style="left:0px;top:534px;width:28px;height:1px;background:#bdbdbd"></div>
<div class="a" style="left:5.50px;top:510.50px;font-size:15px;line-height:21px;color:#262626;font-weight:normal;">12</div>
<div class="a" style="left:0px;top:559px;width:28px;height:1px;background:#bdbdbd"></div>
<div class="a" style="left:5.50px;top:535.50px;font-size:15px;line-height:21px;color:#262626;font-weight:normal;">13</div>
<div class="a" style="left:0px;top:584px;width:28px;height:1px;background:#bdbdbd"></div>
<div class="a" style="left:5.50px;top:560.50px;font-size:15px;line-height:21px;color:#262626;font-weight:normal;">14</div>
<div class="a" style="left:0px;top:609px;width:28px;height:1px;background:#bdbdbd"></div>
<div class="a" style="left:5.50px;top:585.50px;font-size:15px;line-height:21px;color:#262626;font-weight:normal;">15</div>
<div class="a" style="left:0px;top:634px;width:28px;height:1px;background:#bdbdbd"></div>
<div class="a" style="left:5.50px;top:610.50px;font-size:15px;line-height:21px;color:#262626;font-weight:normal;">16</div>
<div class="a" style="left:0px;top:659px;width:28px;height:1px;background:#bdbdbd"></div>
<div class="a" style="left:5.50px;top:635.50px;font-size:15px;line-height:21px;color:#262626;font-weight:normal;">17</div>
<div class="a" style="left:0px;top:684px;width:28px;height:1px;background:#bdbdbd"></div>
<div class="a" style="left:5.50px;top:660.50px;font-size:15px;line-height:21px;color:#262626;font-weight:normal;">18</div>
<div class="a" style="left:29px;top:259px;width:1315px;height:1px;background:#d4d4d4"></div>
<div class="a" style="left:29px;top:284px;width:1315px;height:1px;background:#d4d4d4"></div>
<div class="a" style="left:29px;top:309px;width:1315px;height:1px;background:#d4d4d4"></div>
<div class="a" style="left:29px;top:334px;width:1315px;height:1px;background:#d4d4d4"></div>
<div class="a" style="left:29px;top:359px;width:1315px;height:1px;background:#d4d4d4"></div>
<div class="a" style="left:29px;top:384px;width:1315px;height:1px;background:#d4d4d4"></div>
<div class="a" style="left:29px;top:409px;width:1315px;height:1px;background:#d4d4d4"></div>
<div class="a" style="left:29px;top:434px;width:1315px;height:1px;background:#d4d4d4"></div>
<div class="a" style="left:29px;top:459px;width:1315px;height:1px;background:#d4d4d4"></div>
<div class="a" style="left:29px;top:484px;width:1315px;height:1px;background:#d4d4d4"></div>
<div class="a" style="left:29px;top:509px;width:1315px;height:1px;background:#d4d4d4"></div>
<div class="a" style="left:29px;top:534px;width:1315px;height:1px;background:#d4d4d4"></div>
<div class="a" style="left:29px;top:559px;width:1315px;height:1px;background:#d4d4d4"></div>
<div class="a" style="left:29px;top:584px;width:1315px;height:1px;background:#d4d4d4"></div>
<div class="a" style="left:29px;top:609px;width:1315px;height:1px;background:#d4d4d4"></div>
<div class="a" style="left:29px;top:634px;width:1315px;height:1px;background:#d4d4d4"></div>
<div class="a" style="left:29px;top:659px;width:1315px;height:1px;background:#d4d4d4"></div>
<div class="a" style="left:29px;top:684px;width:1315px;height:1px;background:#d4d4d4"></div>
<div class="a" style="left:110px;top:235px;width:1px;height:443px;background:#d4d4d4"></div>
<div class="a" style="left:182px;top:235px;width:1px;height:443px;background:#d4d4d4"></div>
<div class="a" style="left:407px;top:235px;width:1px;height:443px;background:#d4d4d4"></div>
<div class="a" style="left:479px;top:235px;width:1px;height:443px;background:#d4d4d4"></div>
<div class="a" style="left:633px;top:235px;width:1px;height:443px;background:#d4d4d4"></div>
<div class="a" style="left:705px;top:235px;width:1px;height:443px;background:#d4d4d4"></div>
<div class="a" style="left:777px;top:235px;width:1px;height:443px;background:#d4d4d4"></div>
<div class="a" style="left:849px;top:235px;width:1px;height:443px;background:#d4d4d4"></div>
<div class="a" style="left:921px;top:235px;width:1px;height:443px;background:#d4d4d4"></div>
<div class="a" style="left:993px;top:235px;width:1px;height:443px;background:#d4d4d4"></div>
<div class="a" style="left:1065px;top:235px;width:1px;height:443px;background:#d4d4d4"></div>
<div class="a" style="left:1137px;top:235px;width:1px;height:443px;background:#d4d4d4"></div>
<div class="a" style="left:1209px;top:235px;width:1px;height:443px;background:#d4d4d4"></div>
<div class="a" style="left:1281px;top:235px;width:1px;height:443px;background:#d4d4d4"></div>
<div class="a" style="left:1344px;top:234px;width:1px;height:444px;background:#ababab"></div>
<div class="a" style="left:29px;top:260px;width:820px;height:24px;background:#c6e0b4"></div>
<div class="a" style="left:28px;top:284px;width:822px;height:1px;background:#000"></div>
<div class="a" style="left:28px;top:309px;width:822px;height:1px;background:#000"></div>
<div class="a" style="left:28px;top:334px;width:822px;height:1px;background:#000"></div>
<div class="a" style="left:28px;top:359px;width:822px;height:1px;background:#000"></div>
<div class="a" style="left:28px;top:384px;width:822px;height:1px;background:#000"></div>
<div class="a" style="left:28px;top:409px;width:822px;height:1px;background:#000"></div>
<div class="a" style="left:28px;top:434px;width:822px;height:1px;background:#000"></div>
<div class="a" style="left:28px;top:459px;width:822px;height:1px;background:#000"></div>
<div class="a" style="left:28px;top:484px;width:822px;height:1px;background:#000"></div>
<div class="a" style="left:28px;top:509px;width:822px;height:1px;background:#000"></div>
<div class="a" style="left:28px;top:534px;width:822px;height:1px;background:#000"></div>
<div class="a" style="left:28px;top:559px;width:822px;height:1px;background:#000"></div>
<div class="a" style="left:28px;top:584px;width:822px;height:1px;background:#000"></div>
<div class="a" style="left:28px;top:609px;width:822px;height:1px;background:#000"></div>
<div class="a" style="left:28px;top:634px;width:822px;height:1px;background:#000"></div>
<div class="a" style="left:28px;top:659px;width:822px;height:1px;background:#000"></div>
<div class="a" style="left:28px;top:684px;width:822px;height:1px;background:#000"></div>
<div class="a" style="left:110px;top:259px;width:1px;height:420px;background:#000"></div>
<div class="a" style="left:182px;top:259px;width:1px;height:420px;background:#000"></div>
<div class="a" style="left:407px;top:259px;width:1px;height:420px;background:#000"></div>
<div class="a" style="left:479px;top:259px;width:1px;height:420px;background:#000"></div>
<div class="a" style="left:633px;top:259px;width:1px;height:420px;background:#000"></div>
<div class="a" style="left:705px;top:259px;width:1px;height:420px;background:#000"></div>
<div class="a" style="left:777px;top:259px;width:1px;height:420px;background:#000"></div>
<div class="a" style="left:849px;top:259px;width:1px;height:420px;background:#000"></div>
<div class="a" style="left:0;top:235px;width:1344px;height:443px;overflow:hidden">
<div class="a" style="left:32.00px;top:1.50px;font-size:15px;line-height:21px;color:#000;font-weight:bold;">物品管理表</div>
<div class="a" style="left:30.00px;top:25.50px;font-size:15px;line-height:21px;color:#000;font-weight:normal;">日付</div>
<div class="a" style="left:114.00px;top:26.00px;font-size:15px;line-height:21px;color:#000;font-weight:normal;">部署名</div>
<div class="a" style="left:184.00px;top:26.00px;font-size:15px;line-height:21px;color:#000;font-weight:normal;">プロジェクト名</div>
<div class="a" style="left:411.00px;top:25.50px;font-size:15px;line-height:21px;color:#000;font-weight:normal;">担当者</div>
<div class="a" style="left:483.00px;top:25.50px;font-size:15px;line-height:21px;color:#000;font-weight:normal;">備品名</div>
<div class="a" style="left:637.00px;top:25.50px;font-size:15px;line-height:21px;color:#000;font-weight:normal;">単価</div>
<div class="a" style="left:709.00px;top:25.50px;font-size:15px;line-height:21px;color:#000;font-weight:normal;">数量</div>
<div class="a" style="left:781.00px;top:25.50px;font-size:15px;line-height:21px;color:#000;font-weight:normal;">金額</div>
<div class="a" style="left:46.38px;top:51.00px;font-size:15.5px;line-height:22px;color:#000;font-weight:normal;transform:scaleX(1.0153);transform-origin:0 0;">2018/3/2</div>
<div class="a" style="left:113.00px;top:50.50px;font-size:15px;line-height:21px;color:#000;font-weight:normal;">開発2課</div>
<div class="a" style="left:186.00px;top:50.50px;font-size:15px;line-height:21px;color:#000;font-weight:normal;">A社システム開発</div>
<div class="a" style="left:411.00px;top:50.50px;font-size:15px;line-height:21px;color:#000;font-weight:normal;">澤田</div>
<div class="a" style="left:483.00px;top:50.50px;font-size:15px;line-height:21px;color:#000;font-weight:normal;">水性ボールペン　黒</div>
<div class="a" style="left:679.52px;top:50.50px;font-size:15.5px;line-height:22px;color:#000;font-weight:normal;transform:scaleX(0.8760);transform-origin:0 0;">100</div>
<div class="a" style="left:759.11px;top:50.50px;font-size:15.5px;line-height:22px;color:#000;font-weight:normal;transform:scaleX(0.8937);transform-origin:0 0;">15</div>
<div class="a" style="left:815.91px;top:50.50px;font-size:15.5px;line-height:22px;color:#000;font-weight:normal;transform:scaleX(0.8939);transform-origin:0 0;">1500</div>
<div class="a" style="left:46.38px;top:76.00px;font-size:15.5px;line-height:22px;color:#000;font-weight:normal;transform:scaleX(1.0153);transform-origin:0 0;">2018/3/2</div>
<div class="a" style="left:114.00px;top:75.50px;font-size:15px;line-height:21px;color:#000;font-weight:normal;">営業2課</div>
<div class="a" style="left:186.00px;top:75.50px;font-size:15px;line-height:21px;color:#000;font-weight:normal;">A社システム開発</div>
<div class="a" style="left:411.00px;top:75.50px;font-size:15px;line-height:21px;color:#000;font-weight:normal;">佐藤</div>
<div class="a" style="left:482.50px;top:75.50px;font-size:15px;line-height:21px;color:#000;font-weight:normal;">リングファイル B5</div>
<div class="a" style="left:679.52px;top:75.50px;font-size:15.5px;line-height:22px;color:#000;font-weight:normal;transform:scaleX(0.8760);transform-origin:0 0;">100</div>
<div class="a" style="left:759.11px;top:75.50px;font-size:15.5px;line-height:22px;color:#000;font-weight:normal;transform:scaleX(0.8937);transform-origin:0 0;">10</div>
<div class="a" style="left:815.91px;top:75.50px;font-size:15.5px;line-height:22px;color:#000;font-weight:normal;transform:scaleX(0.8939);transform-origin:0 0;">1000</div>
<div class="a" style="left:46.38px;top:101.00px;font-size:15.5px;line-height:22px;color:#000;font-weight:normal;transform:scaleX(1.0153);transform-origin:0 0;">2018/3/3</div>
<div class="a" style="left:114.00px;top:100.50px;font-size:15px;line-height:21px;color:#000;font-weight:normal;">営業2課</div>
<div class="a" style="left:185.00px;top:100.50px;font-size:15px;line-height:21px;color:#000;font-weight:normal;">C社Web制作</div>
<div class="a" style="left:410.00px;top:100.50px;font-size:15px;line-height:21px;color:#000;font-weight:normal;">山口</div>
<div class="a" style="left:482.50px;top:100.50px;font-size:15px;line-height:21px;color:#000;font-weight:normal;">リングファイル A4</div>
<div class="a" style="left:679.52px;top:100.50px;font-size:15.5px;line-height:22px;color:#000;font-weight:normal;transform:scaleX(0.8760);transform-origin:0 0;">200</div>
<div class="a" style="left:759.11px;top:100.50px;font-size:15.5px;line-height:22px;color:#000;font-weight:normal;transform:scaleX(0.8937);transform-origin:0 0;">12</div>
<div class="a" style="left:815.91px;top:100.50px;font-size:15.5px;line-height:22px;color:#000;font-weight:normal;transform:scaleX(0.8939);transform-origin:0 0;">2400</div>
<div class="a" style="left:46.38px;top:126.00px;font-size:15.5px;line-height:22px;color:#000;font-weight:normal;transform:scaleX(1.0153);transform-origin:0 0;">2018/3/4</div>
<div class="a" style="left:113.00px;top:125.50px;font-size:15px;line-height:21px;color:#000;font-weight:normal;">開発1課</div>
<div class="a" style="left:185.00px;top:125.50px;font-size:15px;line-height:21px;color:#000;font-weight:normal;">H社システム開発</div>
<div class="a" style="left:411.00px;top:125.50px;font-size:15px;line-height:21px;color:#000;font-weight:normal;">鈴木</div>
<div class="a" style="left:483.00px;top:125.50px;font-size:15px;line-height:21px;color:#000;font-weight:normal;">水性ボールペン　赤</div>
<div class="a" style="left:679.52px;top:125.50px;font-size:15.5px;line-height:22px;color:#000;font-weight:normal;transform:scaleX(0.8760);transform-origin:0 0;">100</div>
<div class="a" style="left:759.11px;top:125.50px;font-size:15.5px;line-height:22px;color:#000;font-weight:normal;transform:scaleX(0.8937);transform-origin:0 0;">20</div>
<div class="a" style="left:815.91px;top:125.50px;font-size:15.5px;line-height:22px;color:#000;font-weight:normal;transform:scaleX(0.8939);transform-origin:0 0;">2000</div>
<div class="a" style="left:46.38px;top:151.00px;font-size:15.5px;line-height:22px;color:#000;font-weight:normal;transform:scaleX(1.0153);transform-origin:0 0;">2018/3/7</div>
<div class="a" style="left:113.00px;top:150.50px;font-size:15px;line-height:21px;color:#000;font-weight:normal;">開発2課</div>
<div class="a" style="left:185.00px;top:150.50px;font-size:15px;line-height:21px;color:#000;font-weight:normal;">B社システム開発</div>
<div class="a" style="left:410.00px;top:150.50px;font-size:15px;line-height:21px;color:#000;font-weight:normal;">山田</div>
<div class="a" style="left:483.00px;top:150.50px;font-size:15px;line-height:21px;color:#000;font-weight:normal;">油性マーカー　黒</div>
<div class="a" style="left:679.52px;top:150.50px;font-size:15.5px;line-height:22px;color:#000;font-weight:normal;transform:scaleX(0.8760);transform-origin:0 0;">120</div>
<div class="a" style="left:759.11px;top:150.50px;font-size:15.5px;line-height:22px;color:#000;font-weight:normal;transform:scaleX(0.8937);transform-origin:0 0;">33</div>
<div class="a" style="left:815.91px;top:150.50px;font-size:15.5px;line-height:22px;color:#000;font-weight:normal;transform:scaleX(0.8939);transform-origin:0 0;">3960</div>
<div class="a" style="left:46.38px;top:176.00px;font-size:15.5px;line-height:22px;color:#000;font-weight:normal;transform:scaleX(1.0153);transform-origin:0 0;">2018/3/8</div>
<div class="a" style="left:113.00px;top:175.50px;font-size:15px;line-height:21px;color:#000;font-weight:normal;">開発2課</div>
<div class="a" style="left:185.00px;top:176.00px;font-size:15px;line-height:21px;color:#000;font-weight:normal;">G社サーバーリプレイス</div>
<div class="a" style="left:411.00px;top:176.00px;font-size:15px;line-height:21px;color:#000;font-weight:normal;">長谷部</div>
<div class="a" style="left:483.00px;top:175.50px;font-size:15px;line-height:21px;color:#000;font-weight:normal;">水性ボールペン　赤</div>
<div class="a" style="left:679.52px;top:175.50px;font-size:15.5px;line-height:22px;color:#000;font-weight:normal;transform:scaleX(0.8760);transform-origin:0 0;">100</div>
<div class="a" style="left:759.11px;top:175.50px;font-size:15.5px;line-height:22px;color:#000;font-weight:normal;transform:scaleX(0.8937);transform-origin:0 0;">50</div>
<div class="a" style="left:815.91px;top:175.50px;font-size:15.5px;line-height:22px;color:#000;font-weight:normal;transform:scaleX(0.8939);transform-origin:0 0;">5000</div>
<div class="a" style="left:46.38px;top:201.00px;font-size:15.5px;line-height:22px;color:#000;font-weight:normal;transform:scaleX(1.0153);transform-origin:0 0;">2018/3/9</div>
<div class="a" style="left:114.00px;top:200.50px;font-size:15px;line-height:21px;color:#000;font-weight:normal;">営業1課</div>
<div class="a" style="left:185.00px;top:200.50px;font-size:15px;line-height:21px;color:#000;font-weight:normal;">D社コンサルティング業務</div>
<div class="a" style="left:410.00px;top:201.00px;font-size:15px;line-height:21px;color:#000;font-weight:normal;">斉藤</div>
<div class="a" style="left:482.50px;top:200.50px;font-size:15px;line-height:21px;color:#000;font-weight:normal;">リングファイル A4</div>
<div class="a" style="left:679.52px;top:200.50px;font-size:15.5px;line-height:22px;color:#000;font-weight:normal;transform:scaleX(0.8760);transform-origin:0 0;">200</div>
<div class="a" style="left:759.11px;top:200.50px;font-size:15.5px;line-height:22px;color:#000;font-weight:normal;transform:scaleX(0.8937);transform-origin:0 0;">30</div>
<div class="a" style="left:815.91px;top:200.50px;font-size:15.5px;line-height:22px;color:#000;font-weight:normal;transform:scaleX(0.8939);transform-origin:0 0;">6000</div>
<div class="a" style="left:38.81px;top:226.00px;font-size:15.5px;line-height:22px;color:#000;font-weight:normal;transform:scaleX(0.9926);transform-origin:0 0;">2018/3/10</div>
<div class="a" style="left:114.00px;top:225.50px;font-size:15px;line-height:21px;color:#000;font-weight:normal;">運用1課</div>
<div class="a" style="left:186.00px;top:225.50px;font-size:15px;line-height:21px;color:#000;font-weight:normal;">A社システム開発</div>
<div class="a" style="left:410.00px;top:225.50px;font-size:15px;line-height:21px;color:#000;font-weight:normal;">山口</div>
<div class="a" style="left:482.50px;top:225.50px;font-size:15px;line-height:21px;color:#000;font-weight:normal;">リングファイル A4</div>
<div class="a" style="left:679.52px;top:225.50px;font-size:15.5px;line-height:22px;color:#000;font-weight:normal;transform:scaleX(0.8760);transform-origin:0 0;">200</div>
<div class="a" style="left:759.11px;top:225.50px;font-size:15.5px;line-height:22px;color:#000;font-weight:normal;transform:scaleX(0.8937);transform-origin:0 0;">12</div>
<div class="a" style="left:815.91px;top:225.50px;font-size:15.5px;line-height:22px;color:#000;font-weight:normal;transform:scaleX(0.8939);transform-origin:0 0;">2400</div>
<div class="a" style="left:38.78px;top:251.00px;font-size:15.5px;line-height:22px;color:#000;font-weight:normal;transform:scaleX(1.0227);transform-origin:0 0;">2018/3/11</div>
<div class="a" style="left:114.00px;top:250.50px;font-size:15px;line-height:21px;color:#000;font-weight:normal;">営業2課</div>
<div class="a" style="left:185.00px;top:250.50px;font-size:15px;line-height:21px;color:#000;font-weight:normal;">H社システム開発</div>
<div class="a" style="left:410.00px;top:250.50px;font-size:15px;line-height:21px;color:#000;font-weight:normal;">中村</div>
<div class="a" style="left:483.00px;top:250.50px;font-size:15px;line-height:21px;color:#000;font-weight:normal;">油性マーカー　黒</div>
<div class="a" style="left:679.52px;top:250.50px;font-size:15.5px;line-height:22px;color:#000;font-weight:normal;transform:scaleX(0.8760);transform-origin:0 0;">120</div>
<div class="a" style="left:759.11px;top:250.50px;font-size:15.5px;line-height:22px;color:#000;font-weight:normal;transform:scaleX(0.8937);transform-origin:0 0;">10</div>
<div class="a" style="left:815.91px;top:250.50px;font-size:15.5px;line-height:22px;color:#000;font-weight:normal;transform:scaleX(0.8939);transform-origin:0 0;">1200</div>
<div class="a" style="left:38.81px;top:276.00px;font-size:15.5px;line-height:22px;color:#000;font-weight:normal;transform:scaleX(0.9926);transform-origin:0 0;">2018/3/15</div>
<div class="a" style="left:114.00px;top:275.50px;font-size:15px;line-height:21px;color:#000;font-weight:normal;">運用2課</div>
<div class="a" style="left:185.00px;top:275.50px;font-size:15px;line-height:21px;color:#000;font-weight:normal;">B社システム開発</div>
<div class="a" style="left:410.00px;top:275.50px;font-size:15px;line-height:21px;color:#000;font-weight:normal;">山口</div>
<div class="a" style="left:482.50px;top:275.50px;font-size:15px;line-height:21px;color:#000;font-weight:normal;">リングファイル B5</div>
<div class="a" style="left:679.52px;top:275.50px;font-size:15.5px;line-height:22px;color:#000;font-weight:normal;transform:scaleX(0.8760);transform-origin:0 0;">150</div>
<div class="a" style="left:759.11px;top:275.50px;font-size:15.5px;line-height:22px;color:#000;font-weight:normal;transform:scaleX(0.8937);transform-origin:0 0;">31</div>
<div class="a" style="left:816.80px;top:275.50px;font-size:15.5px;line-height:22px;color:#000;font-weight:normal;transform:scaleX(0.8676);transform-origin:0 0;">4650</div>
<div class="a" style="left:38.79px;top:301.00px;font-size:15.5px;line-height:22px;color:#000;font-weight:normal;transform:scaleX(1.0075);transform-origin:0 0;">2018/3/17</div>
<div class="a" style="left:114.00px;top:300.50px;font-size:15px;line-height:21px;color:#000;font-weight:normal;">営業2課</div>
<div class="a" style="left:185.00px;top:300.50px;font-size:15px;line-height:21px;color:#000;font-weight:normal;">C社Web制作</div>
<div class="a" style="left:410.00px;top:300.50px;font-size:15px;line-height:21px;color:#000;font-weight:normal;">山崎</div>
<div class="a" style="left:483.00px;top:300.50px;font-size:15px;line-height:21px;color:#000;font-weight:normal;">油性マーカー　黒</div>
<div class="a" style="left:679.52px;top:300.50px;font-size:15.5px;line-height:22px;color:#000;font-weight:normal;transform:scaleX(0.8760);transform-origin:0 0;">120</div>
<div class="a" style="left:759.11px;top:300.50px;font-size:15.5px;line-height:22px;color:#000;font-weight:normal;transform:scaleX(0.8937);transform-origin:0 0;">15</div>
<div class="a" style="left:815.91px;top:300.50px;font-size:15.5px;line-height:22px;color:#000;font-weight:normal;transform:scaleX(0.8939);transform-origin:0 0;">1800</div>
<div class="a" style="left:38.81px;top:326.00px;font-size:15.5px;line-height:22px;color:#000;font-weight:normal;transform:scaleX(0.9926);transform-origin:0 0;">2018/3/20</div>
<div class="a" style="left:113.00px;top:325.50px;font-size:15px;line-height:21px;color:#000;font-weight:normal;">開発2課</div>
<div class="a" style="left:185.00px;top:325.50px;font-size:15px;line-height:21px;color:#000;font-weight:normal;">F社ネットワーク構築業務</div>
<div class="a" style="left:411.00px;top:325.50px;font-size:15px;line-height:21px;color:#000;font-weight:normal;">佐藤</div>
<div class="a" style="left:482.50px;top:325.50px;font-size:15px;line-height:21px;color:#000;font-weight:normal;">リングファイル A4</div>
<div class="a" style="left:679.52px;top:325.50px;font-size:15.5px;line-height:22px;color:#000;font-weight:normal;transform:scaleX(0.8760);transform-origin:0 0;">200</div>
<div class="a" style="left:759.11px;top:325.50px;font-size:15.5px;line-height:22px;color:#000;font-weight:normal;transform:scaleX(0.8937);transform-origin:0 0;">20</div>
<div class="a" style="left:816.80px;top:325.50px;font-size:15.5px;line-height:22px;color:#000;font-weight:normal;transform:scaleX(0.8676);transform-origin:0 0;">4000</div>
<div class="a" style="left:38.79px;top:351.00px;font-size:15.5px;line-height:22px;color:#000;font-weight:normal;transform:scaleX(1.0075);transform-origin:0 0;">2018/3/22</div>
<div class="a" style="left:113.00px;top:350.50px;font-size:15px;line-height:21px;color:#000;font-weight:normal;">開発1課</div>
<div class="a" style="left:185.00px;top:350.50px;font-size:15px;line-height:21px;color:#000;font-weight:normal;">H社システム開発</div>
<div class="a" style="left:410.00px;top:350.50px;font-size:15px;line-height:21px;color:#000;font-weight:normal;">川崎</div>
<div class="a" style="left:482.50px;top:350.50px;font-size:15px;line-height:21px;color:#000;font-weight:normal;">リングファイル A4</div>
<div class="a" style="left:679.52px;top:350.50px;font-size:15.5px;line-height:22px;color:#000;font-weight:normal;transform:scaleX(0.8760);transform-origin:0 0;">200</div>
<div class="a" style="left:759.11px;top:350.50px;font-size:15.5px;line-height:22px;color:#000;font-weight:normal;transform:scaleX(0.8937);transform-origin:0 0;">25</div>
<div class="a" style="left:815.91px;top:350.50px;font-size:15.5px;line-height:22px;color:#000;font-weight:normal;transform:scaleX(0.8939);transform-origin:0 0;">5000</div>
<div class="a" style="left:38.79px;top:376.00px;font-size:15.5px;line-height:22px;color:#000;font-weight:normal;transform:scaleX(1.0075);transform-origin:0 0;">2018/3/23</div>
<div class="a" style="left:113.00px;top:375.50px;font-size:15px;line-height:21px;color:#000;font-weight:normal;">開発2課</div>
<div class="a" style="left:185.00px;top:375.50px;font-size:15px;line-height:21px;color:#000;font-weight:normal;">D社コンサルティング業務</div>
<div class="a" style="left:410.00px;top:375.50px;font-size:15px;line-height:21px;color:#000;font-weight:normal;">山下</div>
<div class="a" style="left:483.00px;top:375.50px;font-size:15px;line-height:21px;color:#000;font-weight:normal;">水性ボールペン　黒</div>
<div class="a" style="left:679.52px;top:375.50px;font-size:15.5px;line-height:22px;color:#000;font-weight:normal;transform:scaleX(0.8760);transform-origin:0 0;">100</div>
<div class="a" style="left:759.11px;top:375.50px;font-size:15.5px;line-height:22px;color:#000;font-weight:normal;transform:scaleX(0.8937);transform-origin:0 0;">10</div>
<div class="a" style="left:815.91px;top:375.50px;font-size:15.5px;line-height:22px;color:#000;font-weight:normal;transform:scaleX(0.8939);transform-origin:0 0;">1000</div>
<div class="a" style="left:38.79px;top:401.00px;font-size:15.5px;line-height:22px;color:#000;font-weight:normal;transform:scaleX(1.0075);transform-origin:0 0;">2018/3/28</div>
<div class="a" style="left:113.00px;top:400.50px;font-size:15px;line-height:21px;color:#000;font-weight:normal;">開発2課</div>
<div class="a" style="left:185.00px;top:400.50px;font-size:15px;line-height:21px;color:#000;font-weight:normal;">F社ネットワーク構築業務</div>
<div class="a" style="left:410.00px;top:400.50px;font-size:15px;line-height:21px;color:#000;font-weight:normal;">中村</div>
<div class="a" style="left:483.00px;top:400.50px;font-size:15px;line-height:21px;color:#000;font-weight:normal;">水性ボールペン　黒</div>
<div class="a" style="left:679.52px;top:400.50px;font-size:15.5px;line-height:22px;color:#000;font-weight:normal;transform:scaleX(0.8760);transform-origin:0 0;">100</div>
<div class="a" style="left:759.11px;top:400.50px;font-size:15.5px;line-height:22px;color:#000;font-weight:normal;transform:scaleX(0.8937);transform-origin:0 0;">10</div>
<div class="a" style="left:815.91px;top:400.50px;font-size:15.5px;line-height:22px;color:#000;font-weight:normal;transform:scaleX(0.8939);transform-origin:0 0;">1000</div>
<div class="a" style="left:38.81px;top:426.00px;font-size:15.5px;line-height:22px;color:#000;font-weight:normal;transform:scaleX(0.9926);transform-origin:0 0;">2018/3/30</div>
<div class="a" style="left:114.00px;top:425.50px;font-size:15px;line-height:21px;color:#000;font-weight:normal;">運用2課</div>
<div class="a" style="left:185.00px;top:425.50px;font-size:15px;line-height:21px;color:#000;font-weight:normal;">C社Web制作</div>
<div class="a" style="left:410.00px;top:425.50px;font-size:15px;line-height:21px;color:#000;font-weight:normal;">山本</div>
<div class="a" style="left:483.00px;top:425.50px;font-size:15px;line-height:21px;color:#000;font-weight:normal;">水性ボールペン　赤</div>
<div class="a" style="left:679.52px;top:425.50px;font-size:15.5px;line-height:22px;color:#000;font-weight:normal;transform:scaleX(0.8760);transform-origin:0 0;">100</div>
<div class="a" style="left:759.11px;top:425.50px;font-size:15.5px;line-height:22px;color:#000;font-weight:normal;transform:scaleX(0.8937);transform-origin:0 0;">30</div>
<div class="a" style="left:815.91px;top:425.50px;font-size:15.5px;line-height:22px;color:#000;font-weight:normal;transform:scaleX(0.8939);transform-origin:0 0;">3000</div>
</div>
<div class="a" style="left:28px;top:233px;width:84px;height:27px;border:2px solid #217346;border-bottom:none"></div>
<svg class="a" style="left:29px;top:258px;" width="1316" height="28" viewBox="0 0 1316 28"><path d="M0 2H1315M0 26H1315" stroke="#fff" stroke-width="2"/><path d="M0 2H1315M0 26H1315" stroke="#12643a" stroke-width="2" stroke-dasharray="6.5 2.5"/><path d="M1 0V28" stroke="#fff" stroke-width="2"/><path d="M1 0V28" stroke="#12643a" stroke-width="2" stroke-dasharray="6.5 2.5"/></svg>
<div class="a" style="left:108px;top:257px;width:6px;height:6px;background:#217346"></div>
<div class="a" style="left:1345px;top:234px;width:21px;height:444px;background:#e6e6e6"></div>
<div class="a" style="left:1348px;top:212px;width:15px;height:15px;background:#fff;border:1px solid #ababab"></div>
<svg class="a" style="left:1351px;top:217px;" width="9" height="5" viewBox="0 0 9 5"><path d="M0 5h9L4.5 0z" fill="#777"/></svg>
<div class="a" style="left:1348px;top:362px;width:15px;height:301px;background:#dadada"></div>
<div class="a" style="left:1348px;top:227px;width:15px;height:135px;background:#fff;border:1px solid #ababab"></div>
<div class="a" style="left:1348px;top:663px;width:15px;height:15px;background:#fff;border:1px solid #ababab"></div>
<svg class="a" style="left:1351px;top:668px;" width="9" height="5" viewBox="0 0 9 5"><path d="M0 0h9L4.5 5z" fill="#777"/></svg>
<div class="a" style="left:0px;top:678px;width:1366px;height:28px;background:#e6e6e6"></div>
<div class="a" style="left:0px;top:678px;width:1366px;height:1px;background:#c6c6c6"></div>
<svg class="a" style="left:27px;top:688px;" width="4" height="7" viewBox="0 0 4 7"><path d="M4 0L0 3.5L4 7z" fill="#c8c8c8"/></svg>
<svg class="a" style="left:56px;top:688px;" width="4" height="7" viewBox="0 0 4 7"><path d="M0 0L4 3.5L0 7z" fill="#c8c8c8"/></svg>
<div class="a" style="left:100px;top:678px;width:89px;height:25px;background:#fff;border-left:1px solid #c6c6c6;border-right:1px solid #c6c6c6"></div>
<div class="a" style="left:100px;top:701px;width:89px;height:2px;background:#217346"></div>
<div class="a" style="left:112.00px;top:682.50px;font-size:13px;line-height:18px;color:#217346;font-weight:normal;transform:scaleX(1.0156);transform-origin:0 0;">物品管理表</div>
<svg class="a" style="left:222px;top:683px;" width="16" height="16" viewBox="0 0 16 16"><circle cx="8" cy="8" r="7" fill="none" stroke="#777" stroke-width="1.2"/><path d="M8 4v8M4 8h8" stroke="#777" stroke-width="1.5"/></svg>
<div class="a" style="left:819px;top:687px;width:2px;height:2px;background:#a6a6a6"></div>
<div class="a" style="left:819px;top:691px;width:2px;height:2px;background:#a6a6a6"></div>
<div class="a" style="left:819px;top:695px;width:2px;height:2px;background:#a6a6a6"></div>
<div class="a" style="left:836px;top:685px;width:15px;height:15px;background:#fff;border:1px solid #ababab"></div>
<svg class="a" style="left:840px;top:689px;" width="5" height="8" viewBox="0 0 5 8"><path d="M5 0v8L0 4z" fill="#555"/></svg>
<div class="a" style="left:1295px;top:685px;width:37px;height:15px;background:#d6d6d6"></div>
<div class="a" style="left:851px;top:685px;width:444px;height:15px;background:#fff;border:1px solid #ababab"></div>
<div class="a" style="left:1332px;top:685px;width:15px;height:15px;background:#fff;border:1px solid #ababab"></div>
<svg class="a" style="left:1337px;top:689px;" width="5" height="8" viewBox="0 0 5 8"><path d="M0 0v8l5-4z" fill="#555"/></svg>
<div class="a" style="left:0px;top:707px;width:1366px;height:21px;background:#f3f3f3"></div>
<div class="a" style="left:0px;top:706px;width:1366px;height:1px;background:#d6d6d6"></div>
<div class="a" style="left:8.00px;top:709.00px;font-size:12px;line-height:17px;color:#262626;font-weight:normal;">参照</div>
<svg class="a" style="left:75px;top:710px;" width="14" height="14" viewBox="0 0 14 14"><circle cx="3.2" cy="3.5" r="2.9" fill="#555"/><rect x="7" y="1" width="6" height="2.5" fill="#555"/><path d="M1.5 6.5V12.6H12.6V4" fill="none" stroke="#555" stroke-width="1.1"/><path d="M4 7.5h2M7 7.5h2M10 7.5h2M4 9.5h2M7 9.5h2M10 9.5h2M4 11.3h2M7 11.3h2M10 11.3h2" stroke="#666" stroke-width="1"/></svg>
<svg class="a" style="left:1086px;top:710px;" width="14" height="14" viewBox="0 0 14 14"><rect x="0.6" y="0.6" width="12.4" height="12.4" fill="none" stroke="#666" stroke-width="1.2"/><path d="M4.8 0v13M9 0v13M0 4.8h13M0 9h13" stroke="#666" stroke-width="1.1"/></svg>
<svg class="a" style="left:1124px;top:710px;" width="15" height="14" viewBox="0 0 15 14"><rect x="0.6" y="0.6" width="13" height="12.4" fill="none" stroke="#666" stroke-width="1.2"/><rect x="3.5" y="3" width="7.5" height="7.5" fill="none" stroke="#666"/><path d="M5 5h4.5M5 6.8h4.5M5 8.6h4.5" stroke="#777" stroke-width="0.9"/></svg>
<svg class="a" style="left:1162px;top:710px;" width="15" height="14" viewBox="0 0 15 14"><rect x="0.6" y="0.6" width="13" height="12.4" fill="none" stroke="#666" stroke-width="1.2"/><path d="M4.5 0.5V7M9.5 0.5V7M0.5 7H9.5" fill="none" stroke="#666" stroke-width="1.1"/></svg>
<div class="a" style="left:1193px;top:716px;width:6px;height:2.5px;background:#555"></div>
<div class="a" style="left:1203px;top:717px;width:100px;height:1px;background:#b0b0b0"></div>
<div class="a" style="left:1253px;top:714px;width:1px;height:7px;background:#b0b0b0"></div>
<svg class="a" style="left:1306px;top:713px;" width="8" height="8" viewBox="0 0 8 8"><path d="M4 0v8M0 4h8" stroke="#555" stroke-width="2"/></svg>
<div class="a" style="left:1323.93px;top:709.50px;font-size:12px;line-height:17px;color:#b1b1b1;font-weight:normal;transform:scaleX(1.0667);transform-origin:0 0;">100%</div>
<div class="a" style="left:398px;top:168px;width:544px;height:55px;background:#fff;border:1px solid #3b86d6;box-shadow:0 3px 16px rgba(0,0,0,0.22)"></div>
<div class="a" style="left:399px;top:199px;width:542px;height:1px;background:#b4b4b4"></div>
<div class="a" style="left:406.14px;top:175.80px;font-size:12px;line-height:17px;color:#262626;font-weight:normal;transform:scaleX(0.8561);transform-origin:0 0;">ページ設定 - タイトル行:</div>
<svg class="a" style="left:866px;top:176px;" width="10" height="14" viewBox="0 0 10 14"></svg>
<div class="a" style="left:869.00px;top:175.00px;font-size:13px;line-height:18px;color:#262626;font-weight:normal;">?</div>
<svg class="a" style="left:912px;top:178px;" width="12" height="11" viewBox="0 0 12 11"><path d="M0.5 0.5L11 10.5M11 0.5L0.5 10.5" stroke="#262626" stroke-width="1.1"/></svg>
<div class="a" style="left:403.00px;top:201.50px;font-size:13px;line-height:18px;color:#000;font-weight:normal;">$2:$2</div>
<div class="a" style="left:437px;top:202px;width:1px;height:16px;background:#000"></div>
<div class="a" style="left:911px;top:193px;width:33px;height:32px;border:7px solid #ff0000;border-radius:6px"></div>
<div class="a" style="left:918px;top:200px;width:19px;height:18px;background:#e8e8e8;border:1px solid #fff"></div>
<svg class="a" style="left:924px;top:203px;" width="10" height="12" viewBox="0 0 10 12"><rect x="0.5" y="0.5" width="9" height="11" fill="#fff" stroke="#7a7a7a"/><path d="M0.5 2.5h9" stroke="#7a7a7a"/><path d="M5 4.5v4.5" stroke="#3a80d8" stroke-width="2.2"/><path d="M2 7.2L5 10.2L8 7.2z" fill="#3a80d8"/></svg>
<div class="a" style="left:16px;top:249px;width:1338px;height:47px;border:7px solid #ff0000;border-radius:6px"></div>
<div class="a" style="left:223.8px;top:194.8px;width:40.4px;height:40.4px;border-radius:50%;background:#fff;box-shadow:1px 2px 5px rgba(0,0,0,0.35)"></div>
<div class="a" style="left:226.3px;top:197.3px;width:35.4px;height:35.4px;border-radius:50%;border:1.3px solid #ff0000;background:#fff"></div>
<div class="a" style="left:230.2px;top:201.2px;width:27.6px;height:27.6px;border-radius:50%;background:radial-gradient(circle,#d0d0d0 0%,#c6c6c6 70%,#e8e8e8 100%)"></div>
<div class="a" style="left:224px;top:197.5px;width:40px;text-align:center;font-size:28px;line-height:34px;font-weight:bold;color:#ff0000;-webkit-text-stroke:1.2px #ff0000;text-shadow:3.00px 0.00px 0 #fff,2.77px 1.15px 0 #fff,2.12px 2.12px 0 #fff,1.15px 2.77px 0 #fff,0.00px 3.00px 0 #fff,-1.15px 2.77px 0 #fff,-2.12px 2.12px 0 #fff,-2.77px 1.15px 0 #fff,-3.00px 0.00px 0 #fff,-2.77px -1.15px 0 #fff,-2.12px -2.12px 0 #fff,-1.15px -2.77px 0 #fff,-0.00px -3.00px 0 #fff,1.15px -2.77px 0 #fff,2.12px -2.12px 0 #fff,2.77px -1.15px 0 #fff">7</div>
<div class="a" style="left:954.3px;top:185.8px;width:40.4px;height:40.4px;border-radius:50%;background:#fff;box-shadow:1px 2px 5px rgba(0,0,0,0.35)"></div>
<div class="a" style="left:956.8px;top:188.3px;width:35.4px;height:35.4px;border-radius:50%;border:1.3px solid #ff0000;background:#fff"></div>
<div class="a" style="left:960.7px;top:192.2px;width:27.6px;height:27.6px;border-radius:50%;background:radial-gradient(circle,#d0d0d0 0%,#c6c6c6 70%,#e8e8e8 100%)"></div>
<div class="a" style="left:954.5px;top:188.5px;width:40px;text-align:center;font-size:29px;line-height:34px;font-weight:normal;color:#ff0000;-webkit-text-stroke:1.0px #ff0000;text-shadow:3.00px 0.00px 0 #fff,2.77px 1.15px 0 #fff,2.12px 2.12px 0 #fff,1.15px 2.77px 0 #fff,0.00px 3.00px 0 #fff,-1.15px 2.77px 0 #fff,-2.12px 2.12px 0 #fff,-2.77px 1.15px 0 #fff,-3.00px 0.00px 0 #fff,-2.77px -1.15px 0 #fff,-2.12px -2.12px 0 #fff,-1.15px -2.77px 0 #fff,-0.00px -3.00px 0 #fff,1.15px -2.77px 0 #fff,2.12px -2.12px 0 #fff,2.77px -1.15px 0 #fff">8</div>
</body></html>
